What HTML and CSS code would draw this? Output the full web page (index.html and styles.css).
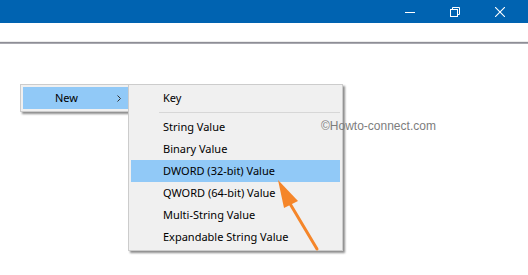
FILE: index.html
```html
<!DOCTYPE html>
<html lang="en">
  <head>
    <meta charset="UTF-8">
    <title>Registry Editor - New</title>
    <link rel="stylesheet" href="styles.css">
  </head>
  <body>

    <div class="titlebar">
      <span class="winBtn">
        <svg width="10" height="10" viewBox="0 0 10 10"><path d="M0 5.5h10" stroke="#fff" stroke-width="1"/></svg>
      </span>
      <span class="winBtn">
        <svg width="10" height="10" viewBox="0 0 10 10" fill="none" stroke="#fff" stroke-width="1">
          <rect x="0.5" y="2.5" width="7" height="7"/>
          <path d="M2.5 2.5v-2h7v7h-2"/>
        </svg>
      </span>
      <span class="winBtn">
        <svg width="10" height="10" viewBox="0 0 10 10"><path d="M0 0l10 10M10 0l-10 10" stroke="#fff" stroke-width="1.1"/></svg>
      </span>
    </div>
    <div class="toolbar"></div>

    <div class="content">

      <div class="menu newMenu">
        <div class="item selected">
          <span class="label">New</span>
          <svg class="chev" width="4" height="7" viewBox="0 0 4 7"><path d="M0.5 0.5l3 3-3 3" fill="none" stroke="#333" stroke-width="1"/></svg>
        </div>
      </div>

      <div class="menu subMenu">
        <div class="item">Key</div>
        <div class="sep"></div>
        <div class="item">String Value</div>
        <div class="item">Binary Value</div>
        <div class="item selected">DWORD (32-bit) Value</div>
        <div class="item">QWORD (64-bit) Value</div>
        <div class="item">Multi-String Value</div>
        <div class="item">Expandable String Value</div>
      </div>

      <div class="watermark">&copy;Howto-connect.com</div>

      <svg class="pointer" width="60" height="80" viewBox="0 0 60 80">
        <path d="M24 30 L52 77" stroke="#f5862a" stroke-width="3" stroke-linecap="round"/>
        <polygon points="13,8 19,36 33,29" fill="#f5862a"/>
      </svg>

    </div>

  </body>
</html>
```

FILE: styles.css
```css
body {
  margin: 0;
  background: #fff;
  font-family: "Noto Sans", "Open Sans", sans-serif;
  font-size: 11px;
  color: #000;
}

.titlebar {
  height: 23px;
  background: #0063b1;
  display: flex;
  justify-content: flex-end;
  padding-right: 6px;
}
.winBtn {
  width: 45px;
  display: flex;
  align-items: center;
  justify-content: center;
}

.toolbar {
  height: 18px;
  border-bottom: 1px solid #ececec;
  box-shadow: 0 1px 0 #8e8e96, 0 2px 0 #a9a9b0;
}

.content {
  position: relative;
  height: 233px;
}

.menu {
  position: absolute;
  background: #f0f0f0;
  border: 1px solid #cccccc;
  padding: 2px;
  box-shadow: 2px 2px 2px rgba(0, 0, 0, 0.45);
}
.item {
  height: 22px;
  line-height: 22px;
  padding-left: 32px;
  white-space: nowrap;
}
.item.selected {
  background: #91c9f7;
}

.newMenu {
  left: 20px;
  top: 42px;
  width: 105px;
}
.newMenu .item {
  display: flex;
  align-items: center;
  justify-content: space-between;
  padding-right: 7px;
}

.subMenu {
  left: 128px;
  top: 42px;
  width: 209px;
}
.sep {
  height: 1px;
  background: #d7d7d7;
  margin: 3px 0 3px 28px;
}

.watermark {
  position: absolute;
  left: 321px;
  top: 77px;
  font-family: "Liberation Sans", Arial, sans-serif;
  font-size: 12px;
  color: #7d7d7d;
}

.pointer {
  position: absolute;
  left: 265px;
  top: 130px;
}
```
